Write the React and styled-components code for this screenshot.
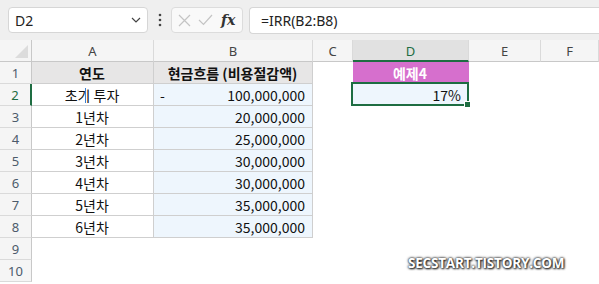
import React from 'react';
import styled, { createGlobalStyle } from 'styled-components';

const GlobalStyle = createGlobalStyle`
  body {
    margin: 0;
    background: #ffffff;
    overflow: hidden;
    font-family: "Noto Sans CJK KR", "Noto Sans", sans-serif;
  }
`;

const GREEN = '#1e6d42';
const COLS = [32, 122, 159, 40, 116, 72, 58];
const ROW_H = 22;

const Page = styled.div`
  width: 599px;
  height: 284px;
  position: relative;
  overflow: hidden;
`;

const Toolbar = styled.div`
  height: 40px;
  background: #efefef;
  display: flex;
  align-items: center;
  padding: 0 0 0 8px;
  box-sizing: border-box;
  gap: 0;
`;

const NameBox = styled.div`
  width: 140px;
  height: 26px;
  box-sizing: border-box;
  background: #fff;
  border: 1px solid #d6d6d6;
  border-radius: 4px;
  display: flex;
  align-items: center;
  justify-content: space-between;
  padding: 0 6px 0 6px;
  font-family: "Noto Sans", sans-serif;
  font-size: 14px;
  color: #222;
`;

const Dots = styled.div`
  width: 23px;
  display: flex;
  justify-content: center;
  color: #444;
`;

const FxBox = styled.div`
  width: 72px;
  height: 26px;
  box-sizing: border-box;
  background: #f9f9f9;
  border: 1px solid #dcdcdc;
  border-radius: 4px;
  display: flex;
  align-items: center;
  padding: 0 4px 0 6px;
  gap: 7px;
`;

const FxText = styled.span`
  font-family: "DejaVu Serif", "Liberation Serif", serif;
  font-style: italic;
  font-weight: bold;
  font-size: 14px;
  color: #333;
  margin-left: 1px;
`;

const FormulaInput = styled.div`
  flex: 1;
  margin-left: 6px;
  height: 27px;
  box-sizing: border-box;
  background: #fff;
  border: 1px solid #d6d6d6;
  border-right: none;
  border-radius: 4px 0 0 4px;
  display: flex;
  align-items: center;
  padding-left: 11px;
  font-family: "Noto Sans", sans-serif;
  font-size: 14px;
  color: #222;
`;

const Sheet = styled.div`
  display: flex;
  flex-direction: column;
`;

const Row = styled.div`
  display: flex;
  height: ${ROW_H}px;
`;

const HeaderRow = styled(Row)`
  background: #f5f5f5;
`;

const Corner = styled.div`
  width: ${COLS[0]}px;
  box-sizing: border-box;
  border-right: 1px solid #c8c8c8;
  border-bottom: 1px solid #c8c8c8;
  position: relative;
  &::after {
    content: '';
    position: absolute;
    right: 3px;
    bottom: 3px;
    width: 0;
    height: 0;
    border-left: 13px solid transparent;
    border-bottom: 13px solid #dcdcdc;
  }
`;

const ColHead = styled.div`
  width: ${(p) => p.w}px;
  box-sizing: border-box;
  border-right: 1px solid #dadada;
  border-bottom: ${(p) => (p.active ? `2px solid ${GREEN}` : '1px solid #c8c8c8')};
  background: ${(p) => (p.active ? '#e1e1e1' : 'transparent')};
  color: ${(p) => (p.active ? GREEN : '#444')};
  display: flex;
  align-items: center;
  justify-content: center;
  font-family: "Noto Sans", sans-serif;
  font-size: 13px;
  padding-top: ${(p) => (p.active ? '1px' : '0')};
`;

const RowHead = styled.div`
  width: ${COLS[0]}px;
  flex-shrink: 0;
  box-sizing: border-box;
  background: #f5f5f5;
  border-right: ${(p) => (p.active ? `2px solid ${GREEN}` : '1px solid #c8c8c8')};
  border-bottom: 1px solid #dadada;
  color: ${(p) => (p.active ? GREEN : '#4c5b6b')};
  display: flex;
  align-items: center;
  justify-content: center;
  font-family: "Noto Sans", sans-serif;
  font-size: 13px;
`;

const Cell = styled.div`
  width: ${(p) => p.w}px;
  flex-shrink: 0;
  box-sizing: border-box;
  position: relative;
  background: ${(p) => p.bg || 'transparent'};
  border-right: ${(p) => (p.lined ? '1px solid #cfcfcf' : '1px solid transparent')};
  border-bottom: ${(p) => (p.lined ? '1px solid #cfcfcf' : '1px solid transparent')};
  color: ${(p) => p.color || '#111'};
  font-weight: ${(p) => (p.bold ? 700 : 400)};
  font-size: 14px;
  display: flex;
  align-items: center;
  justify-content: ${(p) => p.align || 'flex-start'};
  padding: 0 7px 0 6px;
  white-space: nowrap;
`;

const Accounting = styled.span`
  flex: 1;
  display: flex;
  justify-content: space-between;
`;

const Selection = styled.div`
  position: absolute;
  left: -2px;
  top: -2px;
  right: -1px;
  bottom: -1px;
  border: 2px solid ${GREEN};
  pointer-events: none;
  &::after {
    content: '';
    position: absolute;
    right: -4px;
    bottom: -4px;
    width: 5px;
    height: 5px;
    background: ${GREEN};
    border: 1px solid #fff;
  }
`;

const Caret = styled.div`
  position: absolute;
  left: 85px;
  top: 88px;
  width: 1px;
  height: 15px;
  background: #3b7fd4;
`;

const Watermark = styled.div`
  position: absolute;
  left: 408px;
  top: 254px;
  font-family: "Open Sans", "Noto Sans", sans-serif;
  font-weight: 700;
  font-size: 13.5px;
  letter-spacing: -0.2px;
  color: #fff;
  text-shadow: 0 0 3px #333, 0 0 2px #222, 1px 1px 2px #222;
`;

const years = [
  ['초기 투자', '100,000,000', true],
  ['1년차', '20,000,000'],
  ['2년차', '25,000,000'],
  ['3년차', '30,000,000'],
  ['4년차', '30,000,000'],
  ['5년차', '35,000,000'],
  ['6년차', '35,000,000'],
];

const Chevron = () => (
  <svg width="10" height="6" viewBox="0 0 10 6">
    <path d="M1 1 L5 5 L9 1" fill="none" stroke="#444" strokeWidth="1.2" />
  </svg>
);

const VDots = () => (
  <svg width="4" height="14" viewBox="0 0 4 14">
    <circle cx="2" cy="2" r="1.3" fill="#444" />
    <circle cx="2" cy="7" r="1.3" fill="#444" />
    <circle cx="2" cy="12" r="1.3" fill="#444" />
  </svg>
);

const Cross = () => (
  <svg width="13" height="13" viewBox="0 0 13 13">
    <path d="M1 1 L12 12 M12 1 L1 12" stroke="#c4c4c4" strokeWidth="1.2" />
  </svg>
);

const Check = () => (
  <svg width="15" height="12" viewBox="0 0 15 12">
    <path d="M1 6 L5.5 10.5 L14 1" fill="none" stroke="#c4c4c4" strokeWidth="1.2" />
  </svg>
);

const letters = ['A', 'B', 'C', 'D', 'E', 'F'];

const App = () => {
  const rows = [];
  for (let r = 1; r <= 10; r++) {
    let cells;
    if (r === 1) {
      cells = [
        <Cell key="a" w={COLS[1]} lined bg="#e7e6e6" bold align="center">연도</Cell>,
        <Cell key="b" w={COLS[2]} lined bg="#e7e6e6" bold align="center">현금흐름 (비용절감액)</Cell>,
        <Cell key="c" w={COLS[3]} />,
        <Cell key="d" w={COLS[4]} bg="#d66fcd" bold color="#fff" align="center">예제4</Cell>,
      ];
    } else if (r <= 8) {
      const [label, amount, neg] = years[r - 2];
      cells = [
        <Cell key="a" w={COLS[1]} lined align="center">{label}</Cell>,
        <Cell key="b" w={COLS[2]} lined bg="#eef6fd" align="flex-end">
          {neg ? (
            <Accounting>
              <span>-</span>
              <span>{amount}</span>
            </Accounting>
          ) : (
            amount
          )}
        </Cell>,
        <Cell key="c" w={COLS[3]} />,
        r === 2 ? (
          <Cell key="d" w={COLS[4]} bg="#eef6fd" align="flex-end">
            17%
            <Selection />
          </Cell>
        ) : (
          <Cell key="d" w={COLS[4]} />
        ),
      ];
    } else {
      cells = [
        <Cell key="a" w={COLS[1]} />,
        <Cell key="b" w={COLS[2]} />,
        <Cell key="c" w={COLS[3]} />,
        <Cell key="d" w={COLS[4]} />,
      ];
    }
    rows.push(
      <Row key={r}>
        <RowHead active={r === 2}>{r}</RowHead>
        {cells}
        <Cell w={COLS[5]} />
        <Cell w={COLS[6]} />
      </Row>
    );
  }

  return (
    <Page>
      <GlobalStyle />
      <Toolbar>
        <NameBox>
          <span>D2</span>
          <Chevron />
        </NameBox>
        <Dots>
          <VDots />
        </Dots>
        <FxBox>
          <Cross />
          <Check />
          <FxText>fx</FxText>
        </FxBox>
        <FormulaInput>=IRR(B2:B8)</FormulaInput>
      </Toolbar>
      <Sheet>
        <HeaderRow>
          <Corner />
          {letters.map((l, i) => (
            <ColHead key={l} w={COLS[i + 1]} active={l === 'D'}>
              {l}
            </ColHead>
          ))}
        </HeaderRow>
        {rows}
      </Sheet>
      <Caret />
      <Watermark>SECSTART.TISTORY.COM</Watermark>
    </Page>
  );
};

export default App;
